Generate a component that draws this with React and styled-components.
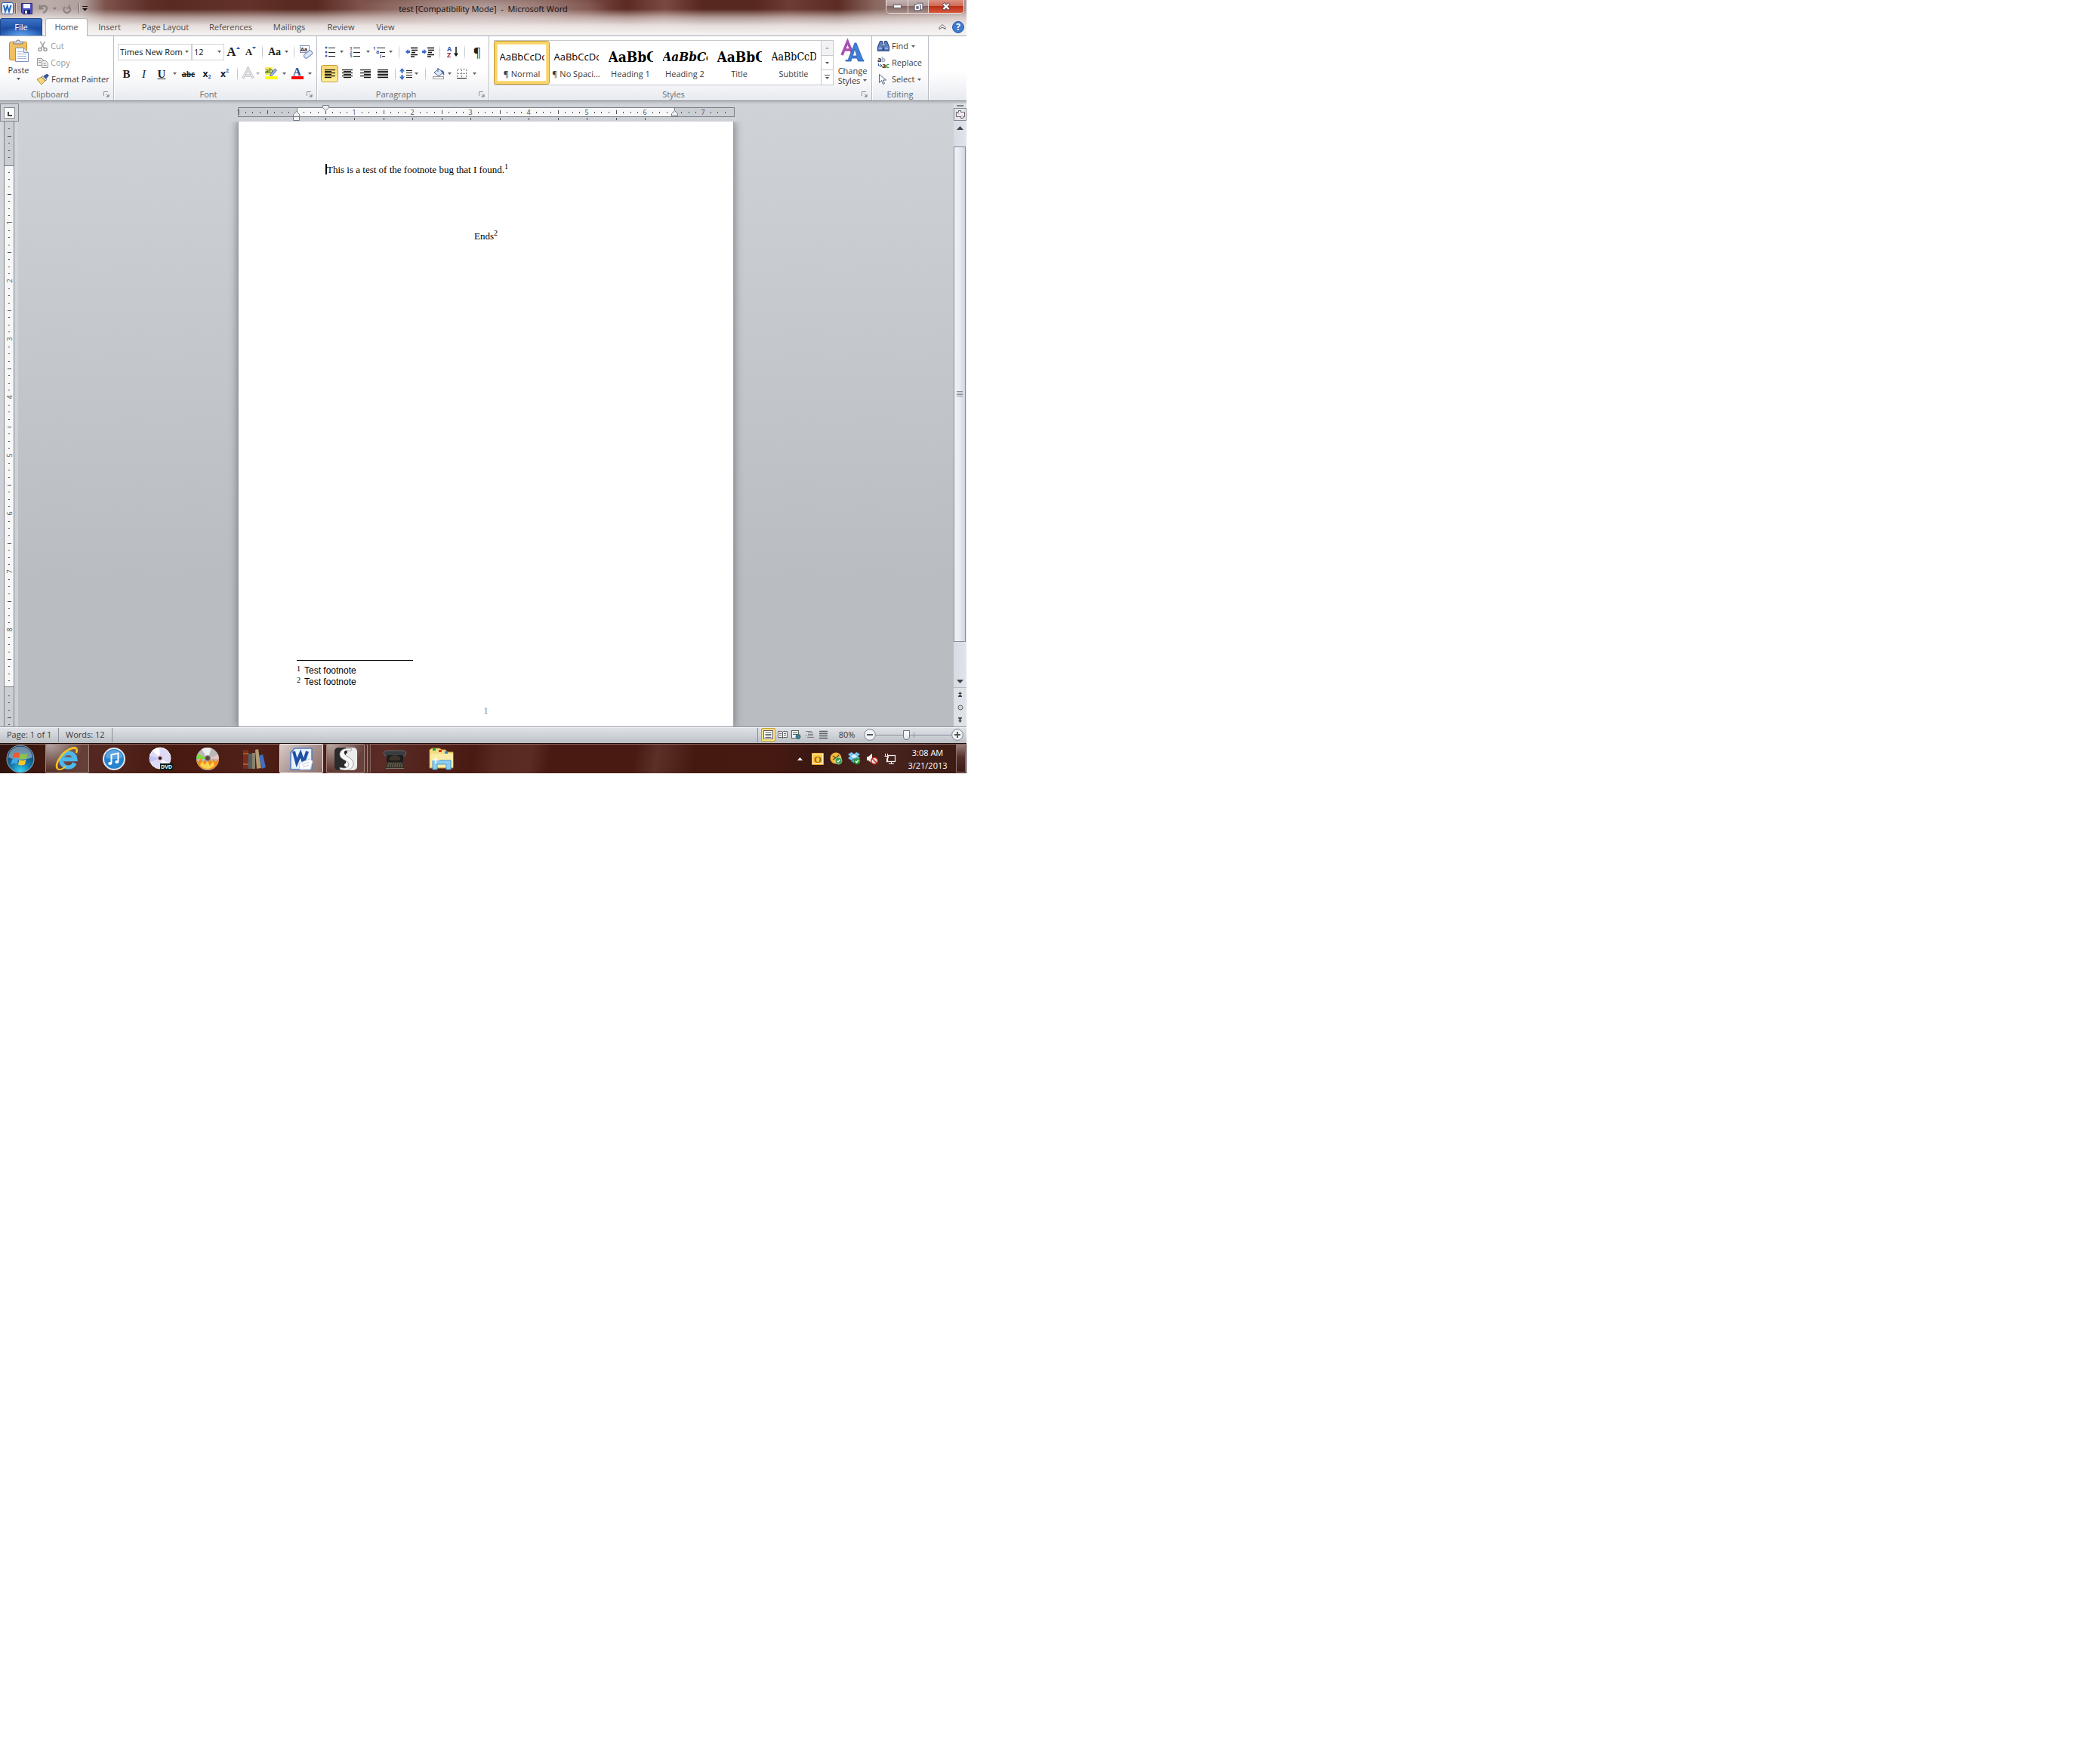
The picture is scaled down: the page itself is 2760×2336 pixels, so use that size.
import React from "react";
import styled, { createGlobalStyle, css } from "styled-components";

const ui = `"Open Sans", "Noto Sans", sans-serif`;
const serif = `"Liberation Serif", serif`;
const cambria = `"DejaVu Serif Condensed", "DejaVu Serif", serif`;

const Global = createGlobalStyle`
  *, *::before, *::after { box-sizing: border-box; }
  body { margin: 0; background: #fff; font-family: ${ui}; font-size: 11px; line-height: 14px; color: #3b3b3b; }
  button { font: inherit; color: inherit; background: none; border: 0; padding: 0; margin: 0; }
  svg { display: block; flex: none; overflow: visible; }
`;

/* ---------- window shell ---------- */
const Desktop = styled.div`
  width: 100%;
  max-width: 1280px;
  display: flex;
  flex-direction: column;
  overflow: hidden;
`;
const Chrome = styled.header`
  border-bottom: 1px solid #a9adb5;
  background:
    radial-gradient(ellipse 170px 22px at 50% 11px, rgba(255,255,255,.42), transparent),
    linear-gradient(180deg, rgba(255,255,255,0) 12px, rgba(250,247,246,.55) 23px, rgba(248,246,245,.88) 34px, #f6f4f3 100%),
    linear-gradient(90deg, #a8928e 0, #bcaeab 60px, #b0a09d 108px, #7d534c 140px, #5c2e26 200px, #582a22 230px, #63332b 330px, #582a22 380px, #582a22 420px, #7c5149 475px, #85605a 640px, #7a4c45 780px, #5c2a21 830px, #7a4a42 880px, #572820 930px, #572820 1000px, #6d3c34 1045px, #5c2c24 1110px, #8b6962 1160px, #ad9590 1280px);
`;
const TitleBar = styled.div`
  display: grid;
  grid-template-columns: 1fr auto 1fr;
  height: 24px;
`;
const QuickAccess = styled.div`
  display: flex;
  align-items: center;
  padding: 0 0 2px 2px;
`;
const QuickButton = styled.button`
  width: ${(p) => p.$w}px;
  height: 20px;
  display: flex;
  align-items: center;
  justify-content: center;
`;
const QuickRule = styled.span`
  width: 2px;
  height: 14px;
  margin: 0 2px;
  background: linear-gradient(90deg, #6f5d5a 50%, #d6cccb 50%);
`;
const WindowTitle = styled.h1`
  margin: 0;
  padding-top: 5px;
  font-size: 11px;
  font-weight: 400;
  line-height: 14px;
  color: #111;
  white-space: pre;
`;
const WindowButtons = styled.div`
  justify-self: end;
  display: flex;
  height: 18px;
  margin-right: 3px;
  border: 1px solid #efe6e4;
  border-top: 0;
  border-radius: 0 0 5px 5px;
  overflow: hidden;
  box-shadow: 0 0 1px #4a2a25;
`;
const WindowButton = styled.button`
  width: ${(p) => p.$w}px;
  display: flex;
  align-items: center;
  justify-content: center;
  border-left: ${(p) => (p.$first ? 0 : "1px solid #e4d8d6")};
  background: ${(p) =>
    p.$close
      ? "linear-gradient(180deg, #dc9384 0, #cf6a55 45%, #b92f16 50%, #d9583a 100%)"
      : "linear-gradient(180deg, #c4b3b1 0, #ae9996 45%, #83645f 50%, #a58f8b 100%)"};
`;

const TabRow = styled.nav`
  display: flex;
  height: 23px;
  align-items: stretch;
`;
const FileTab = styled.button`
  width: 56px;
  margin-right: 4px;
  border: 1px solid #1d458c;
  border-bottom: 0;
  border-radius: 3px 3px 0 0;
  color: #fff;
  text-align: center;
  background: radial-gradient(ellipse 26px 12px at 50% 100%, #5fa3ee, transparent), linear-gradient(180deg, #3c72c4, #2358ae 45%, #1d4da0 55%, #2a66bd);
`;
const Tab = styled.button`
  width: ${(p) => p.$w}px;
  text-align: center;
  color: #4a4a4a;
  ${(p) =>
    p.$active &&
    css`
      margin-bottom: -1px;
      padding-bottom: 1px;
      background: #fff;
      border: 1px solid #b5b5ba;
      border-bottom: 0;
      border-radius: 3px 3px 0 0;
    `}
`;
const TabTools = styled.div`
  display: flex;
  align-items: center;
  gap: 8px;
  margin-left: auto;
  padding-right: 3px;
`;

/* ---------- ribbon ---------- */
const Ribbon = styled.section`
  display: flex;
  height: 86px;
  border-bottom: 1px solid #84898f;
  background: linear-gradient(180deg, #fff 0, #fff 46px, #f4f5f8 66px, #e7eaf0 100%);
`;
const Group = styled.div`
  width: ${(p) => p.$w}px;
  display: flex;
  flex-direction: column;
  border-right: 1px solid #b9bcc2;
  box-shadow: 1px 0 0 #fff;
`;
const GroupBody = styled.div`
  flex: 1;
  display: flex;
  padding-left: ${(p) => p.$pad || 0}px;
`;
const GroupFoot = styled.div`
  display: flex;
  align-items: center;
  height: 16px;
  color: #666c76;
  span { flex: 1; text-align: center; }
  button { width: 18px; display: flex; justify-content: center; }
`;
const Rows = styled.div`
  display: flex;
  flex-direction: column;
  padding-top: 9px;
  gap: 6px;
`;
const Row = styled.div`
  display: flex;
  align-items: center;
  height: 23px;
`;
const Tool = styled.button`
  width: ${(p) => p.$w}px;
  height: 23px;
  display: flex;
  align-items: center;
  justify-content: center;
  ${(p) =>
    p.$on &&
    css`
      border: 1px solid #c29a3a;
      border-radius: 3px;
      background: linear-gradient(180deg, #fcd97e, #fddf70 50%, #fff2a0);
    `}
`;
const Rule = styled.span`
  width: ${(p) => p.$w}px;
  height: 20px;
  background: linear-gradient(180deg, transparent, #c3c6cc 30%, #c3c6cc 70%, transparent) center / 1px 100% no-repeat;
`;
const Glyph = styled.span`
  font-family: ${serif};
  font-size: ${(p) => p.$size || 15}px;
  line-height: 18px;
  color: #222;
  font-weight: ${(p) => (p.$light ? 400 : 700)};
  font-style: ${(p) => (p.$italic ? "italic" : "normal")};
  text-decoration: ${(p) => p.$line || "none"};
`;
const Sans = styled(Glyph)`
  font-family: ${ui};
  display: inline-flex;
  small {
    font-size: 7px;
    line-height: 10px;
    color: #2a5db0;
    align-self: ${(p) => (p.$sup ? "flex-start" : "flex-end")};
  }
`;
const Combo = styled.label`
  position: relative;
  width: ${(p) => p.$w}px;
  height: 22px;
  display: block;
  select {
    width: 100%;
    height: 100%;
    appearance: none;
    border: 1px solid #cfd2d8;
    border-radius: 0;
    background: #fff;
    padding: 0 0 0 2px;
    font: 11px/14px ${ui};
    color: #111;
  }
  svg { position: absolute; right: 4px; top: 9px; pointer-events: none; }
`;

const PasteButton = styled.button`
  width: 49px;
  padding-top: 4px;
  display: flex;
  flex-direction: column;
  align-items: center;
  gap: 3px;
`;
const Stack = styled.div`
  display: flex;
  flex-direction: column;
  padding-top: 2px;
`;
const LineButton = styled.button`
  display: flex;
  align-items: center;
  gap: ${(p) => p.$gap || 3}px;
  height: 22px;
  white-space: nowrap;
  color: ${(p) => (p.$off ? "#9a9a9a" : "#3b3b3b")};
`;

const Gallery = styled.div`
  display: flex;
  width: 450px;
  height: 60px;
  margin-top: 5px;
  border: 1px solid #c4c7cc;
  background: #fff;
`;
const StyleCell = styled.button`
  width: 72px;
  height: 56px;
  margin-top: 1px;
  padding: 7px 3px 0;
  border: 3px solid transparent;
  border-radius: 3px;
  display: flex;
  flex-direction: column;
  align-items: center;
  ${(p) => p.$on && css`border-color: #f9d469; box-shadow: inset 0 0 0 1px #fbe08a, 0 0 0 1px #c8992e;`}
`;
const Sample = styled.span`
  width: 59px;
  height: 26px;
  overflow: hidden;
  white-space: nowrap;
  text-align: left;
  color: #000;
  font-family: ${(p) => p.$font};
  font-size: ${(p) => p.$size}px;
  font-weight: ${(p) => (p.$bold ? 700 : 400)};
  font-style: ${(p) => (p.$italic ? "italic" : "normal")};
  line-height: 20px;
`;
const StyleName = styled.span`
  white-space: nowrap;
`;
const GalleryNav = styled.div`
  display: flex;
  flex-direction: column;
  width: 16px;
  border-left: 1px solid #c4c7cc;
`;
const GalleryStep = styled.button`
  flex: 1;
  display: flex;
  align-items: center;
  justify-content: center;
  border-top: ${(p) => (p.$first ? 0 : "1px solid #c4c7cc")};
  background: ${(p) => (p.$first ? "#f2f2f4" : "#fff")};
`;
const ChangeStyles = styled.button`
  width: 50px;
  padding-top: 6px;
  display: flex;
  flex-direction: column;
  align-items: center;
  line-height: 13px;
  svg + span { margin-top: 5px; }
`;
const Inline = styled.span`
  display: flex;
  align-items: center;
  gap: 4px;
`;

/* ---------- workspace ---------- */
const Workspace = styled.main`
  display: grid;
  grid-template-columns: 24px 1fr 17px;
  grid-template-rows: 24px auto;
  padding-top: 3px;
  background: linear-gradient(180deg, #b3b7bc 0, #cfd2d7 4px, #cdd0d5 60px, #b9bdc2 640px, #b9bdc2 100%);
`;
const TabCorner = styled.button`
  width: 25px;
  height: 24px;
  border: 1px solid #858a92;
  display: flex;
  align-items: center;
  justify-content: center;
  background: #ced1d6;
`;
const TopRuler = styled.div`
  display: flex;
  justify-content: center;
`;
const SideRuler = styled.div`
  background: rgba(214, 218, 223, 0.65);
  padding-left: 5px;
  overflow: hidden;
`;
const Canvas = styled.div`
  display: flex;
  justify-content: center;
`;
const Sheet = styled.article`
  width: 655px;
  min-height: 801px;
  display: flex;
  flex-direction: column;
  padding: 56px 77px 13px;
  background: #fff;
  box-shadow: -1px 0 0 #a0a4a9, 1px 0 0 #a0a4a9, 0 0 11px 1px #70757b;
  clip-path: inset(0 -14px);
  font-family: ${serif};
  font-size: 13px;
  line-height: 16px;
  color: #000;
  sup { font-size: 10px; line-height: 0; vertical-align: 5px; }
`;
const Para = styled.p`
  margin: 0;
  padding-left: 38px;
  display: flex;
`;
const Caret = styled.span`
  width: 2px;
  height: 14px;
  background: #000;
`;
const Ends = styled.p`
  margin: 72px 0 0;
  text-align: center;
`;
const Notes = styled.ol`
  list-style: none;
  margin: auto 0 0;
  padding: 7px 0 0;
  font: 12px/15px "Liberation Sans", sans-serif;
  background: linear-gradient(#000, #000) 0 0 / 154px 1px no-repeat;
  li { display: flex; align-items: flex-start; gap: 5px; }
  sup { font-family: ${serif}; line-height: 9px; }
`;
const Folio = styled.p`
  margin: 22px 0 0;
  text-align: center;
  font-size: 12px;
  color: #7d7d7d;
`;

const ScrollTop = styled.div`
  display: flex;
  flex-direction: column;
  align-items: center;
  background: #dde0e6;
`;
const SplitBar = styled.span`
  width: 9px;
  height: 2px;
  margin: 2px 0;
  background: #7c8087;
`;
const RulerToggle = styled.button`
  width: 17px;
  height: 17px;
  border: 1px solid #858a92;
  background: #e4e6ea;
  display: flex;
  align-items: center;
  justify-content: center;
`;
const ScrollRail = styled.div`
  display: flex;
  flex-direction: column;
  align-items: stretch;
  background: linear-gradient(90deg, #d7dbe2, #dfe4ed);
`;
const ScrollStep = styled.button`
  height: ${(p) => p.$h}px;
  display: flex;
  align-items: center;
  justify-content: center;
`;
const ScrollThumb = styled.div`
  height: 656px;
  margin: 16px 1px 44px 0;
  border: 1px solid #868d98;
  background: linear-gradient(90deg, #f0f2f7, #e8ebf2 50%, #d0d5de);
  display: flex;
  align-items: center;
  justify-content: center;
`;
const BrowseSteps = styled.div`
  margin-top: auto;
  border-top: 1px solid #b7bbc4;
  background: #dde1e8;
  display: flex;
  flex-direction: column;
`;

/* ---------- status bar ---------- */
const StatusBar = styled.footer`
  height: 22px;
  display: flex;
  align-items: center;
  padding: 0 4px 1px 0;
  border-top: 1px solid #8f959d;
  box-shadow: inset 0 1px 0 #f5f6f8;
  background: linear-gradient(180deg, #e0e3e8, #cfd2d7 50%, #bbbfc4);
`;
const StatusCell = styled.button`
  height: 19px;
  width: ${(p) => p.$w}px;
  padding-left: 9px;
  text-align: left;
  white-space: nowrap;
  border-right: 1px solid #8a8f96;
`;
const StatusRight = styled.div`
  margin-left: auto;
  display: flex;
  align-items: center;
  height: 19px;
  padding-left: 4px;
  border-left: 1px solid #8a8f96;
`;
const ViewButton = styled.button`
  width: 18px;
  height: 18px;
  display: flex;
  align-items: center;
  justify-content: center;
  ${(p) => p.$on && css`
    width: 19px;
    border: 1px solid #c29a3a;
    border-radius: 2px;
    background: linear-gradient(180deg, #fcdf85, #ffe97f);
  `}
`;
const ZoomValue = styled.button`
  width: 45px;
  text-align: center;
`;
const Slider = styled.input`
  appearance: none;
  width: 100px;
  height: 16px;
  margin: 0;
  background:
    linear-gradient(#8a929e, #8a929e) 50% 50% / 1px 7px no-repeat,
    linear-gradient(#8a929e, #8a929e) 0 50% / 100% 1px no-repeat;
  &::-webkit-slider-thumb {
    appearance: none;
    width: 9px;
    height: 13px;
    background: linear-gradient(#fff, #dfe3ea);
    border: 1px solid #6f7681;
    border-radius: 1px 1px 5px 5px;
  }
`;

/* ---------- taskbar ---------- */
const Taskbar = styled.nav`
  height: 40px;
  display: flex;
  border-top: 1px solid #1c0d0a;
  box-shadow: inset 0 1px 0 #8c6a64;
  color: #fff;
  background: linear-gradient(100deg, #2e120d 0, #43190f 70px, #542821 125px, #47190f 230px, #4f2119 330px, #46180f 400px, #5a2c25 500px, #481a12 620px, #57291f 650px, #5a2c23 695px, #481a12 720px, #481a12 830px, #5b3027 860px, #461910 910px, #471a11 1010px, #3a1711 1060px, #47241d 1150px, #3c1a14 100%);
`;
const Start = styled.button`
  width: 60px;
  padding-right: 6px;
  display: flex;
  align-items: center;
  justify-content: center;
`;
const TaskList = styled.div`
  display: flex;
  gap: 4px;
`;
const Task = styled.button`
  width: 58px;
  display: flex;
  align-items: center;
  justify-content: center;
  border: 1px solid transparent;
  border-radius: 2px;
  ${(p) => p.$open && css`
    border-color: #a08682;
    background: radial-gradient(ellipse 44px 34px at 10% 0, rgba(255,255,255,.55), transparent), rgba(255,255,255,.12);
  `}
  ${(p) => p.$active && css`
    border-color: #f1e8e6;
    background: linear-gradient(135deg, #d8cbc9, #a58d89 60%, #8e706b);
  `}
  ${(p) => p.$stacked && css`
    width: 51px;
    margin-right: 7px;
    box-shadow: 3px 0 0 #5b332c, 4px 0 0 #a08682, 7px 0 0 #5b332c, 8px 0 0 #80625d;
  `}
`;
const Tray = styled.div`
  margin-left: auto;
  display: flex;
  align-items: center;
`;
const TrayButton = styled.button`
  width: 24px;
  height: 24px;
  display: flex;
  align-items: center;
  justify-content: center;
`;
const Clock = styled.time`
  width: 75px;
  text-align: center;
  line-height: 17px;
`;
const ShowDesktop = styled.button`
  align-self: stretch;
  width: 13px;
  margin: 1px 1px 1px 0;
  border: 1px solid #8f7570;
  background: linear-gradient(180deg, #957a75, #54302a 45%, #3c1c16);
`;

/* ---------- icons ---------- */
const Down = ({ c = "#5a5a5a" }) => (
  <svg width="5" height="3"><path d="M0 0h5L2.5 3z" fill={c} /></svg>
);
const Up = ({ c = "#5a5a5a" }) => (
  <svg width="5" height="3"><path d="M0 3h5L2.5 0z" fill={c} /></svg>
);
const Launcher = () => (
  <svg width="8" height="8" fill="none" stroke="#8a8f98"><path d="M.5 6V.5H6M3.5 3.5l3 3M7 3.5V7H3.5" /><path d="M5 7h2V5z" fill="#8a8f98" /></svg>
);
const WordMark = () => (
  <svg width="16" height="16">
    <rect x=".5" y=".5" width="15" height="15" rx="2" fill="#eef4fc" stroke="#2a5fae" />
    <path d="M3 4l2 8 2.6-7 2.4 7L12.6 4" fill="none" stroke="#2566b8" strokeWidth="2" />
  </svg>
);
const SaveIcon = () => (
  <svg width="15" height="15">
    <path d="M.5.5h14v14h-12l-2-2z" fill="#4a4fc4" stroke="#23267c" />
    <rect x="3" y="1" width="9" height="6" fill="#f4f6fd" />
    <rect x="4" y="9" width="8" height="5" fill="#1c1f5e" /><rect x="5" y="10" width="3" height="4" fill="#e8eaf8" />
  </svg>
);
const Undo = ({ flip }) => (
  <svg width="13" height="13" fill="none" stroke="#8d8381" strokeWidth="2.2">
    {flip ? <path d="M9 1.5v4h-4M8.5 4A4.5 4.5 0 1 1 3 4" /> : <path d="M1.5 1.5v5h5M2 6c3-5 9-4 9 0s-3 5-5 6" />}
  </svg>
);
const PasteIcon = () => (
  <svg width="28" height="31">
    <rect x="1.5" y="3.5" width="23" height="24" rx="2" fill="#f0bf62" stroke="#c18a34" />
    <path d="M7 6V3.5h3.500a2.500 2.500 0 0 1 5 0H19V6z" fill="#dadde2" stroke="#70757d" />
    <path d="M9.500 11.500h11l6 6v12h-17z" fill="#f8fafd" stroke="#7d93ba" />
    <path d="M20.500 11.500v6h6" fill="#dfe8f5" stroke="#7d93ba" />
    <path d="M12 16.500h7M12 19.500h12M12 22.500h12M12 25.500h12" stroke="#a7b8d6" />
  </svg>
);
const CutIcon = () => (
  <svg width="15" height="15" fill="none" stroke="#999" strokeWidth="1.5"><path d="M4.5 1l5 9M10.5 1l-5 9" /><circle cx="4" cy="11.5" r="2" /><circle cx="11" cy="11.5" r="2" /></svg>
);
const CopyIcon = () => (
  <svg width="15" height="14" fill="#ececec" stroke="#999"><path d="M.5 1.5h6l2 2v7h-8z" /><path d="M6.5 4.5h5l3 3v6h-8z" /><path d="M2 4.5h3M2 6.5h3M8.5 8.5h3M8.5 10.5h4" /></svg>
);
const BrushIcon = () => (
  <svg width="16" height="15"><path d="M0 7l6-3 5 5-5 5C4 12 2 10 0 7z" fill="#f6d77a" stroke="#b78f35" /><path d="M6 4l2-1.500 5 5L11 9z" fill="#d9dce4" stroke="#555" strokeWidth=".7" /><path d="M9 3l4-3 2.500 2L12 6z" fill="#3a55a4" stroke="#233469" strokeWidth=".7" /></svg>
);
const ClearFormat = () => (
  <svg width="17" height="17">
    <rect x=".5" y=".5" width="12" height="9" fill="#fff" stroke="#7f93b5" />
    <text x="1" y="8" fontSize="7" fontWeight="700" fontFamily="Open Sans" fill="#223">Aa</text>
    <rect x="5" y="9" width="12" height="6" rx="2.5" transform="rotate(-38 11 12)" fill="#dfe7f4" stroke="#6f87b4" />
  </svg>
);
const EffectA = () => (
  <svg width="17" height="17"><path d="M1.5 15L8.500 2l7 13M4.500 11h8" fill="none" stroke="#c9c9cd" strokeWidth="3.5" /><path d="M1.5 15L8.500 2l7 13M4.500 11h8" fill="none" stroke="#f7f7f7" strokeWidth="1" /></svg>
);
const Highlight = () => (
  <svg width="17" height="17">
    <rect x="0" y="0" width="10" height="10" fill="#f4ea5c" /><text x="0" y="8" fontSize="9" fontFamily="Open Sans" fill="#222">ab</text>
    <path d="M7 10l6-8 2.500 2-6 7-3 .5z" fill="#9db9e6" stroke="#3b5c9b" strokeWidth=".8" /><rect y="12" width="16" height="4" fill="#ff0" />
  </svg>
);
const FontColor = () => (
  <svg width="16" height="17"><text x="2" y="11" fontSize="15" fontWeight="700" fontFamily="Liberation Serif" fill="#2f4f8f">A</text><rect y="12" width="16" height="4" fill="#f00" /></svg>
);
const ListIcon = ({ kind }) => (
  <svg width={kind === "multi" ? 18 : 15} height="16">
    {kind === "bullet" && [2, 8, 13].map((y) => <circle key={y} cx="2" cy={y} r="1.5" fill="#3e66b0" />)}
    {kind === "number" && ["1", "2", "3"].map((t, i) => <text key={t} x="0" y={5 + i * 5} fontSize="6" fontWeight="700" fontFamily="Open Sans" fill="#2f5aa8">{t}</text>)}
    {kind !== "multi" && <path d="M5 2.5h9M5 8.5h9M5 13.5h9" stroke="#222" />}
    {kind === "multi" && <>
      <path d="M5 2.5h11M9 8.5h7M12 13.5h4" stroke="#222" />
      <text x="0" y="5" fontSize="6" fontWeight="700" fontFamily="Open Sans" fill="#2f5aa8">1</text>
      <text x="4" y="10" fontSize="7" fontWeight="700" fontFamily="Open Sans" fill="#2f5aa8">a</text>
      <text x="9" y="16" fontSize="7" fontWeight="700" fontFamily="Open Sans" fill="#2f5aa8">i</text></>}
  </svg>
);
const Indent = ({ right }) => (
  <svg width="17" height="14">
    <path d="M7 1.5h9M8 4.5h8M8 7.5h5M7 10.5h9M7 13h5" stroke="#111" strokeWidth="1.5" />
    <path d={right ? "M6 6.500L2.500 3v2H0v3h2.500v2z" : "M0 6.500L3.500 3v2H6v3H3.500v2z"} fill="#3a6dc8" />
  </svg>
);
const SortIcon = () => (
  <svg width="15" height="17"><text x="0" y="8" fontSize="9" fontWeight="700" fontFamily="Open Sans" fill="#2f5aa8">A</text><text x="0" y="16" fontSize="9" fontWeight="700" fontFamily="Open Sans" fill="#9c3038">Z</text><path d="M12 2v10" stroke="#111" strokeWidth="1.5" /><path d="M9 10.5h6L12 15z" fill="#111" /></svg>
);
const Align = ({ kind }) => {
  const short = { left: 0, center: 2, right: 5, justify: 0 }[kind];
  const w = kind === "justify" ? 14 : kind === "center" ? 10 : 9;
  return (
    <svg width="14" height="12" fill="#111">
      {[0, 2, 4, 6, 8, 10].map((y, i) => <rect key={y} x={i % 2 ? short : 0} y={y} width={i % 2 ? w : 14} height="1.2" />)}
    </svg>
  );
};
const Spacing = () => (
  <svg width="18" height="16"><path d="M3.5 0l3.500 4.500H0zM3.500 16L0 11.500h7z" fill="#3a6dc8" /><path d="M3.5 4v3M3.5 9v3" stroke="#3a6dc8" strokeWidth="2" /><path d="M9 3.5h8M9 6.5h8M9 9.5h8M9 12.5h8" stroke="#222" /></svg>
);
const Shading = () => (
  <svg width="18" height="17"><path d="M3 7l6-5 6 5-6 5z" fill="#dfe7f3" stroke="#46608f" /><path d="M8 1v5" stroke="#46608f" /><path d="M12 4c4 0 5 3 4 7-2-1-1-4-4-5z" fill="#3a6dc8" /><rect x="1.5" y="12.5" width="14" height="3" fill="#fff" stroke="#999" /></svg>
);
const Borders = () => (
  <svg width="14" height="14" fill="none" stroke="#666" strokeDasharray="1 1"><path d="M.5 0v14M6.5 0v14M12.5 0v14M0 .5h13M0 6.5h13" /><path d="M0 12.5h13" stroke="#111" strokeDasharray="none" /></svg>
);
const ChangeIcon = () => (
  <svg width="30" height="28">
    <path d="M1 19L8.500 1l7 17M4 12h9" fill="none" stroke="#a84fb4" strokeWidth="3.5" />
    <path d="M6 27h7l1-4h7l1.500 4H30v-1.500h-1L20 3h-2L9 25.500H6zM15 20l3-9 3 9z" fill="#3f7fd8" stroke="#2a5eb0" strokeWidth=".8" />
  </svg>
);
const FindIcon = () => (
  <svg width="16" height="14" fill="#5b7fc2" stroke="#22386e"><path d="M3.500.5h3v4l1 9h-7V8z" /><path d="M9.500.5h3l3 7.500v5.500h-7v-9z" /><path d="M6.500 5h3M2 10h4M10 10h4" stroke="#dfe8fa" /></svg>
);
const ReplaceIcon = () => (
  <svg width="17" height="16" fontFamily="Open Sans" fontWeight="700" fontSize="9"><text x="0" y="7" fill="#333">a</text><text x="5" y="7" fill="#aaa">b</text><text x="6" y="15" fill="#333">a</text><text x="11" y="15" fill="#2c9440">c</text><path d="M1.5 9v3h4M4 10l2 2-2 2" fill="none" stroke="#3a5ca8" /></svg>
);
const SelectIcon = () => (
  <svg width="15" height="16"><path d="M2.500 1.500v11l3-3 2 5 2-1-2-4.500h4z" fill="#fff" stroke="#4b6186" /></svg>
);
const DocLines = ({ kind }) => (
  <svg width="13" height="12" fill="none" stroke="#5d5f63">
    {kind === "print" && <><rect x=".5" y=".5" width="12" height="11" fill="#fff" /><path d="M2.5 3.5h8M2.5 5.5h8M2.5 7.5h8M2.5 9.5h8" /></>}
    {kind === "read" && <><path d="M.5 1.5h5l1 1 1-1h5v8h-5l-1 1-1-1h-5zM6.5 2v9" fill="#f3f3f3" /><path d="M2 4.5h3M2 6.5h3M8 4.5h3M8 6.5h3" /></>}
    {kind === "web" && <><rect x=".5" y=".5" width="9" height="10" fill="#f3f3f3" /><path d="M2 3.5h6M2 5.5h6" /><circle cx="9" cy="8.5" r="3" fill="#3d80a8" stroke="#2d6a4a" /></>}
    {kind === "outline" && <path d="M1 1.5h8M4 3.5h7M4 5.5h7M1 7.5h2M4 7.5h7M3 9.5h9" stroke="#7e8186" />}
    {kind === "draft" && <path d="M1 1.5h11M1 4.5h11M1 7.5h11M1 10.5h11" strokeWidth="1.5" />}
  </svg>
);
const ZoomKnob = ({ plus }) => (
  <svg width="16" height="16" fill="none" stroke="#555"><circle cx="8" cy="8" r="7.3" fill="#f1f3f6" stroke="#7c828b" /><path d={plus ? "M4 8h8M8 4v8" : "M4 8h8"} strokeWidth="2" /></svg>
);

const StartOrb = () => (
  <svg width="38" height="38">
    <defs>
      <radialGradient id="orb" cx=".5" cy=".95" r=".9"><stop offset="0" stopColor="#35d6f2" /><stop offset=".4" stopColor="#1878ab" /><stop offset="1" stopColor="#0c3558" /></radialGradient>
    </defs>
    <circle cx="19" cy="19" r="18" fill="url(#orb)" stroke="#8fb3c4" />
    <path d="M3 17C4 7 11 2.500 19 2.500S34 7 35 17c-10 4-22 4-32 0z" fill="#fff" opacity=".4" />
    <path d="M10 12c3-2 6-2 8-.5L16.500 18c-2-1.500-5-1.500-8 .5z" fill="#f0592a" />
    <path d="M19.500 12c3 1.500 6 1.500 9-.5L27 18c-3 2-6 1.500-9 .5z" fill="#8fc640" />
    <path d="M8 20c3-2 6-2 8-.5L14.500 26c-2-1.500-5-1.500-8 .5z" fill="#3fa9e8" />
    <path d="M17.500 20c3 1.500 6 1.500 9-.5L25 26c-3 2-6 1.500-9 .5z" fill="#fcc726" />
  </svg>
);
const IeIcon = () => (
  <svg width="32" height="32" fill="none">
    <path d="M26 21.500a9.500 9.500 0 1 1 .8-5H9" stroke="#4bb8ee" strokeWidth="5.5" />
    <path d="M3 29C-1 22 10 6 22 2c6-2 8 1 6 6" stroke="#f7c520" strokeWidth="2.6" />
    <path d="M3 29c3 3 9-1 11-3" stroke="#f7c520" strokeWidth="2" />
  </svg>
);
const ItunesIcon = () => (
  <svg width="30" height="30"><circle cx="15" cy="15" r="14" fill="#2683d0" stroke="#dfe6ec" strokeWidth="2" /><path d="M4 13a11 10 0 0 1 22 0c-7 3-15 3-22 0z" fill="#fff" opacity=".25" /><path d="M11.5 20.500V9.500l9-2v11" fill="none" stroke="#fff" strokeWidth="2" /><ellipse cx="9.8" cy="21" rx="2.6" ry="2" fill="#fff" /><ellipse cx="18.8" cy="19" rx="2.6" ry="2" fill="#fff" /></svg>
);
const DvdIcon = () => (
  <svg width="32" height="32"><circle cx="15" cy="15" r="14" fill="#dcdaf6" stroke="#f5f5ff" /><path d="M15 15L5 5a14 14 0 0 1 9-4zM15 15l12 7a14 14 0 0 1-9 7z" fill="#fff" /><path d="M15 15L2 20a14 14 0 0 1-1-8z" fill="#c2c4f4" /><circle cx="15" cy="15" r="4" fill="#f0c8e0" /><circle cx="15" cy="15" r="2.3" fill="#222" /><rect x="15" y="22" width="17" height="9" fill="#0b1a1c" /><text x="16" y="29" fontSize="7" fontWeight="700" fontFamily="Open Sans" fill="#dff">DVD</text></svg>
);
const BurnIcon = () => (
  <svg width="32" height="32"><circle cx="16" cy="16" r="15" fill="#b9b9b9" /><path d="M16 16L8 3a15 15 0 0 1 13-1z" fill="#eee" /><path d="M16 16L1 16a15 15 0 0 1 2-7z" fill="#7adb3c" /><path d="M16 16l14-6 1 6z" fill="#e9c2c2" /><path d="M1 17l3 3 3-5 3 5 3-3 2 4 3-6 3 5 3-4 2 4 5-4c0 8-6 14-14.500 14S2 25 1 17z" fill="#f08b1d" /><path d="M6 24l3-5 3 5 4-5 3 6 4-6 2 5c-3 6-15 7-19 0z" fill="#fbd44c" /><circle cx="16" cy="15" r="3.5" fill="#5c4640" stroke="#999" /></svg>
);
const BooksIcon = () => (
  <svg width="32" height="30"><rect x="1" y="3" width="7" height="25" fill="#7c2c1c" /><path d="M1 8h7M1 22h7" stroke="#c98c3c" /><rect x="8" y="8" width="5" height="20" fill="#4c6468" /><path d="M13 7h4v21h-4z" fill="#8c806c" /><path d="M17 3l4-1 4 25-6 1z" fill="#b39b74" /><path d="M22 11l5-2 4 17-5 2z" fill="#3f70c4" /></svg>
);
const WordIcon = () => (
  <svg width="32" height="32"><path d="M2 8l5-6h23v28H2z" fill="#e9f1fb" stroke="#4d7ec0" strokeWidth="1.5" /><path d="M6 6l4 15 5-12 4 12 5-15" fill="none" stroke="#1f4fa3" strokeWidth="4" /><path d="M13 22l14-6 4 3-3 11-14 0z" fill="#fff" stroke="#b9cbe4" /><path d="M17 24l9-4M18 27l8-3" stroke="#bccbe0" /></svg>
);
const ScrivIcon = () => (
  <svg width="32" height="32"><rect x="1" y="1" width="30" height="30" rx="5" fill="#2a2a2a" /><path d="M16 1h10a5 5 0 0 1 5 5v20a5 5 0 0 1-5 5H16z" fill="#ececec" /><path d="M24 3C14 0 7 5 8 11c1 7 13 7 12 13-1 4-6 5-12 3v3c11 3 18-1 18-8 0-8-12-9-12-14 0-3 4-4 8-2z" fill="#f7f7f7" stroke="#777" strokeWidth=".7" /><circle cx="16" cy="7" r="2" fill="#222" /><circle cx="16" cy="24" r="2" fill="#fff" /></svg>
);
const TypewriterIcon = () => (
  <svg width="32" height="28"><path d="M4 3h24l3 3-2 4H3L1 6z" fill="#3a3c40" stroke="#777b80" strokeWidth=".7" /><path d="M5 9h22v9H5z" fill="#1d1d1f" /><path d="M9 12c4-4 10-4 14 0v4H9z" fill="#3c3428" /><path d="M5 18h22l1 8H4z" fill="#37332a" /><path d="M7 20h18M6 22h20M6 24h20" stroke="#7d745f" strokeDasharray="2 1" /><path d="M4 26.5h24" stroke="#777" /></svg>
);
const ExplorerIcon = () => (
  <svg width="34" height="32"><path d="M1 4l3-2h10l3 2h5l2 3h8v21H1z" fill="#f3dc82" stroke="#c5a343" /><rect x="5" y="2" width="4" height="3" fill="#24a844" /><rect x="13" y="4" width="4" height="3" fill="#d7382c" /><rect x="21" y="6" width="4" height="3" fill="#2c84d8" /><path d="M2 9h30v18H2z" fill="#f9eaa6" /><path d="M5 30V18h24v12h-6v-7H11v7z" fill="#8ccdf0" stroke="#4898c8" /><path d="M9 13v9M4.500 17.500h9" stroke="#fff" strokeWidth="1.5" /></svg>
);
const tray = {
  outlook: <svg width="16" height="16"><rect width="16" height="16" rx="1" fill="#f3a11a" /><rect x="1.5" y="1.5" width="13" height="13" fill="#fbc640" stroke="#fff3c9" /><text x="8" y="13" textAnchor="middle" fontSize="13" fontWeight="700" fontFamily="Liberation Serif" fill="#a85f04">O</text></svg>,
  sync: <svg width="17" height="17"><circle cx="8" cy="8" r="7.5" fill="#f0b93c" /><path d="M4 5l4 3 4-4M4 10l4-2 3 4" stroke="#5b4216" fill="none" strokeWidth="1.3" /><circle cx="11.5" cy="11.5" r="4.5" fill="#2c9a4a" stroke="#fff" strokeWidth=".6" /><path d="M9.5 11.5l1.500 1.500 2.500-3" stroke="#fff" fill="none" strokeWidth="1.3" /></svg>,
  dropbox: <svg width="17" height="17"><path d="M4.500 0L8 2.500 11.500 0 16 3l-3 2.500L16 8l-4.500 3L8 8.500 4.500 11 0 8l3-2.500L0 3z" fill="#74c3f5" /><path d="M8 3l4 2.500L8 8 4 5.500z" fill="#e4f4fe" /><path d="M4 12l4-3 4 3-4 2.500z" fill="#4ea2e0" /><circle cx="12" cy="12" r="4.3" fill="#2c9a3a" /><path d="M10 12l1.500 1.500L14 10.500" stroke="#fff" fill="none" strokeWidth="1.3" /></svg>,
  volume: <svg width="16" height="16"><path d="M1 5h2l5-4v13l-5-4H1z" fill="#f2f2f2" /><circle cx="11" cy="10.5" r="4.3" fill="#e8e8e8" stroke="#d8281c" strokeWidth="1.6" /><path d="M8 7.5l6 6" stroke="#d8281c" strokeWidth="1.6" /></svg>,
  network: <svg width="16" height="16" fill="none" stroke="#f0f0f0"><rect x="4.5" y="3.5" width="10" height="8" strokeWidth="1.3" /><path d="M6 14.5h7M9.5 12v2M1.5 1v3M4.5 1v3M.5 4.5h5v2l-2 1v5" /></svg>,
};

/* ---------- rulers ---------- */
const INCH = 77;
const marks = (from, to, origin) => {
  const out = [];
  for (let i = Math.ceil(((from - origin) * 8) / INCH); origin + (i * INCH) / 8 < to; i += 1)
    out.push({ i, at: Math.round(origin + (i * INCH) / 8) });
  return out;
};
const HorizontalRuler = () => (
  <svg width="667" height="24" role="img" aria-label="Horizontal ruler" fontFamily="Open Sans" fontSize="9" fill="#4c5058">
    <rect x="5.5" y="5.5" width="657" height="12" fill="#cbced3" stroke="#7d828a" />
    <rect x="83" y="6" width="500" height="11" fill="#f7f7f8" />
    <path d="M83.5 6v11M583.5 6v11" stroke="#7d828a" />
    {marks(8, 655, 82).map(({ i, at }) =>
      i === 0 ? null : i % 8 === 0 ? (
        <text key={i} x={at} y="15" textAnchor="middle">{Math.abs(i / 8)}</text>
      ) : (
        <rect key={i} x={at} y={i % 4 === 0 ? 9 : 11} width="1" height={i % 4 === 0 ? 5 : 2} />
      )
    )}
    <text x="6" y="15" textAnchor="middle">1</text>
    {marks(115, 560, 82).filter((m) => m.i % 4 === 0).map(({ i, at }) => <rect key={i} x={at} y="19" width="1" height="3" />)}
    <g fill="#eceef1" stroke="#777c84">
      <path d="M117.5 2.5h8v3l-4 4-4-4z" />
      <path d="M78.5 17.5v-3l4-4 4 4v3zM78.5 17.5h8v5h-8z" />
      <path d="M579.5 16.5v-3l4-4 4 4v3z" />
    </g>
  </svg>
);
const VerticalRuler = () => (
  <svg width="15" height="801" role="img" aria-label="Vertical ruler" fontFamily="Open Sans" fontSize="9" fill="#4c5058">
    <rect x=".5" y="-1" width="13" height="803" fill="#cbced3" stroke="#7d828a" />
    <rect x="1" y="59" width="12" height="689" fill="#f7f7f8" />
    <path d="M0 58.5h14M0 748.5h14" stroke="#7d828a" />
    {marks(5, 800, 57).map(({ i, at }) =>
      i === 0 || i === 72 ? null : i % 8 === 0 ? (
        <text key={i} transform={`translate(11 ${at}) rotate(-90)`} textAnchor="middle">{Math.abs(i / 8)}</text>
      ) : (
        <rect key={i} x={i % 4 === 0 ? 5 : 6} y={at} width={i % 4 === 0 ? 5 : 2} height="1" />
      )
    )}
  </svg>
);

/* ---------- content ---------- */
const tabs = [["Home", 56], ["Insert", 58], ["Page Layout", 90], ["References", 83], ["Mailings", 72], ["Review", 65], ["View", 53]];
const styleSet = [
  { sample: "AaBbCcDc", name: "¶ Normal", font: ui, size: 13, on: true },
  { sample: "AaBbCcDc", name: "¶ No Spaci...", font: ui, size: 13 },
  { sample: "AaBbC", name: "Heading 1", font: cambria, size: 19, bold: true },
  { sample: "AaBbCc", name: "Heading 2", font: cambria, size: 17, bold: true, italic: true },
  { sample: "AaBbC", name: "Title", font: cambria, size: 19, bold: true },
  { sample: "AaBbCcD", name: "Subtitle", font: cambria, size: 14 },
];

const Split = ({ w, cw = 7, label, off, children }) => (
  <>
    <Tool $w={w} aria-label={label}>{children}</Tool>
    <Tool $w={cw} aria-label={`${label} options`}><Down c={off ? "#aaa" : undefined} /></Tool>
  </>
);
const RibbonGroup = ({ w, name, pad, launcher = true, children }) => (
  <Group $w={w} aria-label={name}>
    <GroupBody $pad={pad}>{children}</GroupBody>
    <GroupFoot><span>{name}</span>{launcher && <button aria-label={`${name} settings`}><Launcher /></button>}</GroupFoot>
  </Group>
);

export default function App() {
  return (
    <Desktop>
      <Global />
      <Chrome>
        <TitleBar>
          <QuickAccess>
            <WordMark />
            <QuickRule />
            <QuickButton $w={22} aria-label="Save"><SaveIcon /></QuickButton>
            <QuickButton $w={22} aria-label="Undo"><Undo /></QuickButton>
            <QuickButton $w={9} aria-label="Undo options"><Down c="#7f7573" /></QuickButton>
            <QuickButton $w={25} aria-label="Redo"><Undo flip /></QuickButton>
            <QuickRule />
            <QuickButton $w={8} aria-label="Customize toolbar">
              <svg width="7" height="7"><path d="M0 .5h7" stroke="#111" /><path d="M0 3h7L3.5 6.500z" fill="#111" /></svg>
            </QuickButton>
          </QuickAccess>
          <WindowTitle>{"test [Compatibility Mode]  -  Microsoft Word"}</WindowTitle>
          <WindowButtons>
            <WindowButton $w={28} $first aria-label="Minimize"><svg width="11" height="5"><rect x=".5" y=".5" width="10" height="4" fill="#fff" stroke="#5d5f70" /></svg></WindowButton>
            <WindowButton $w={27} aria-label="Restore"><svg width="12" height="12" fill="none"><path d="M4 2.5h6.500V9M2.500 4.500h5v5h-5z" stroke="#55586a" strokeWidth="3.5" /><path d="M4 2.5h6.500V9M2.500 4.500h5v5h-5z" stroke="#fff" strokeWidth="1.7" /></svg></WindowButton>
            <WindowButton $w={47} $close aria-label="Close"><svg width="12" height="11"><path d="M2 1.5l8 8M10 1.5l-8 8" stroke="#5a4a58" strokeWidth="4" /><path d="M2.5 2l7 7M9.500 2l-7 7" stroke="#fff" strokeWidth="2.4" /></svg></WindowButton>
          </WindowButtons>
        </TitleBar>
        <TabRow>
          <FileTab>File</FileTab>
          {tabs.map(([name, w], i) => <Tab key={name} $w={w} $active={i === 0}>{name}</Tab>)}
          <TabTools>
            <button aria-label="Minimize ribbon"><svg width="10" height="8"><path d="M1 6.5v-2l4-4 4 4v2L5 4z" fill="#fff" stroke="#555" /></svg></button>
            <button aria-label="Help"><svg width="16" height="16"><circle cx="8" cy="8" r="7.5" fill="#3f7bd0" stroke="#2a5aa6" /><text x="8" y="12" fontSize="12" fontWeight="700" textAnchor="middle" fontFamily="Open Sans" fill="#fff">?</text></svg></button>
          </TabTools>
        </TabRow>
      </Chrome>

      <Ribbon>
        <RibbonGroup w={151} name="Clipboard">
          <PasteButton><PasteIcon /><span>Paste</span><Down /></PasteButton>
          <Stack>
            <LineButton $off><CutIcon />Cut</LineButton>
            <LineButton $off><CopyIcon />Copy</LineButton>
            <LineButton><BrushIcon />Format Painter</LineButton>
          </Stack>
        </RibbonGroup>

        <RibbonGroup w={269} name="Font" pad={5}>
          <Rows>
            <Row>
              <Combo $w={98}><select aria-label="Font"><option>Times New Rom</option></select><Down /></Combo>
              <Combo $w={43}><select aria-label="Font size"><option>12</option></select><Down /></Combo>
              <Tool $w={24} aria-label="Grow font"><Glyph $size={17}>A</Glyph><svg width="5" height="14"><path d="M0 3h5L2.5 0z" fill="#2f5aa8" /></svg></Tool>
              <Tool $w={22} aria-label="Shrink font"><Glyph $size={13}>A</Glyph><svg width="5" height="14"><path d="M0 0h5L2.5 3z" fill="#2f5aa8" /></svg></Tool>
              <Rule $w={8} />
              <Split w={25} label="Change case"><Glyph $size={14}>Aa</Glyph></Split>
              <Rule $w={12} />
              <Tool $w={20} aria-label="Clear formatting"><ClearFormat /></Tool>
            </Row>
            <Row>
              <Tool $w={23} aria-label="Bold"><Glyph>B</Glyph></Tool>
              <Tool $w={23} aria-label="Italic"><Glyph $italic $light>I</Glyph></Tool>
              <Split w={24} cw={11} label="Underline"><Glyph $line="underline">U</Glyph></Split>
              <Tool $w={25} aria-label="Strikethrough"><Sans $size={10} $line="line-through">abc</Sans></Tool>
              <Tool $w={24} aria-label="Subscript"><Sans $size={12}>x<small>2</small></Sans></Tool>
              <Tool $w={23} aria-label="Superscript"><Sans $size={12} $sup>x<small>2</small></Sans></Tool>
              <Rule $w={10} />
              <Split w={19} label="Text effects" off><EffectA /></Split>
              <Split w={28} label="Highlight"><Highlight /></Split>
              <Split w={27} label="Font color"><FontColor /></Split>
            </Row>
          </Rows>
        </RibbonGroup>

        <RibbonGroup w={228} name="Paragraph" pad={5}>
          <Rows>
            <Row>
              <Split w={24} label="Bullets"><ListIcon kind="bullet" /></Split>
              <Split w={28} label="Numbering"><ListIcon kind="number" /></Split>
              <Split w={23} label="Multilevel list"><ListIcon kind="multi" /></Split>
              <Rule $w={14} />
              <Tool $w={21} aria-label="Decrease indent"><Indent /></Tool>
              <Tool $w={22} aria-label="Increase indent"><Indent right /></Tool>
              <Rule $w={8} />
              <Tool $w={26} aria-label="Sort"><SortIcon /></Tool>
              <Rule $w={6} />
              <Tool $w={28} aria-label="Show marks"><Sans $size={16} $light>¶</Sans></Tool>
            </Row>
            <Row>
              <Tool $w={23} $on aria-label="Align left"><Align kind="left" /></Tool>
              <Tool $w={23} aria-label="Center"><Align kind="center" /></Tool>
              <Tool $w={25} aria-label="Align right"><Align kind="right" /></Tool>
              <Tool $w={22} aria-label="Justify"><Align kind="justify" /></Tool>
              <Rule $w={10} />
              <Split w={20} label="Line spacing"><Spacing /></Split>
              <Rule $w={16} />
              <Split w={20} cw={8} label="Shading"><Shading /></Split>
              <Split w={26} label="Borders"><Borders /></Split>
            </Row>
          </Rows>
        </RibbonGroup>

        <RibbonGroup w={507} name="Styles" pad={6}>
          <Gallery>
            {styleSet.map((s) => (
              <StyleCell key={s.name} $on={s.on}>
                <Sample $font={s.font} $size={s.size} $bold={s.bold} $italic={s.italic}>{s.sample}</Sample>
                <StyleName>{s.name}</StyleName>
              </StyleCell>
            ))}
            <GalleryNav>
              <GalleryStep $first aria-label="Previous styles"><Up c="#b5b5b8" /></GalleryStep>
              <GalleryStep aria-label="Next styles"><Down /></GalleryStep>
              <GalleryStep aria-label="All styles"><svg width="7" height="7"><path d="M0 .5h7" stroke="#555" /><path d="M1 3h5L3.5 6z" fill="#555" /></svg></GalleryStep>
            </GalleryNav>
          </Gallery>
          <ChangeStyles><ChangeIcon /><span>Change</span><Inline>Styles<Down /></Inline></ChangeStyles>
        </RibbonGroup>

        <RibbonGroup w={75} name="Editing" pad={7} launcher={false}>
          <Stack>
            <LineButton><FindIcon /><Inline>Find<Down /></Inline></LineButton>
            <LineButton $gap={2}><ReplaceIcon />Replace</LineButton>
            <LineButton $gap={4}><SelectIcon /><Inline>Select<Down /></Inline></LineButton>
          </Stack>
        </RibbonGroup>
      </Ribbon>

      <Workspace>
        <TabCorner aria-label="Tab stop type"><svg width="15" height="15"><rect x=".5" y=".5" width="14" height="14" fill="#fff" stroke="#858a92" /><path d="M6 6v5h5" fill="none" stroke="#444" strokeWidth="2" /></svg></TabCorner>
        <TopRuler><HorizontalRuler /></TopRuler>
        <ScrollTop>
          <SplitBar />
          <RulerToggle aria-label="View ruler"><svg width="12" height="12" fill="#f5eef0" stroke="#6b6070"><path d="M.5 2.5h3v-2h3v2h5v6h-2v2h-3v-2h-6z" /><path d="M2 3l3 3M6 9l3-3" strokeDasharray="1 1" /></svg></RulerToggle>
        </ScrollTop>
        <SideRuler><VerticalRuler /></SideRuler>
        <Canvas>
          <Sheet>
            <Para><Caret /><span>This is a test of the footnote bug that I found.<sup>1</sup></span></Para>
            <Ends>Ends<sup>2</sup></Ends>
            <Notes>
              <li><sup>1</sup>Test footnote</li>
              <li><sup>2</sup>Test footnote</li>
            </Notes>
            <Folio>1</Folio>
          </Sheet>
        </Canvas>
        <ScrollRail>
          <ScrollStep $h={17} aria-label="Scroll up"><svg width="9" height="5"><path d="M0 5h9L4.500 0z" fill="#444" /></svg></ScrollStep>
          <ScrollThumb><svg width="8" height="8"><path d="M0 .5h8M0 2.5h8M0 4.5h8M0 6.5h8" stroke="#888e97" /></svg></ScrollThumb>
          <ScrollStep $h={16} aria-label="Scroll down"><svg width="9" height="5"><path d="M0 0h9L4.500 5z" fill="#444" /></svg></ScrollStep>
          <BrowseSteps>
            <ScrollStep $h={17} aria-label="Previous page"><svg width="5" height="7"><path d="M0 3h5L2.5 0zM0 6h5L2.5 3z" fill="#444" /><path d="M0 6.5h5" stroke="#444" /></svg></ScrollStep>
            <ScrollStep $h={17} aria-label="Browse object"><svg width="8" height="8"><circle cx="4" cy="4" r="3" fill="#cfd2d8" stroke="#666" /></svg></ScrollStep>
            <ScrollStep $h={17} aria-label="Next page"><svg width="5" height="7"><path d="M0 1h5L2.5 4zM0 4h5L2.5 7z" fill="#444" /><path d="M0 .5h5" stroke="#444" /></svg></ScrollStep>
          </BrowseSteps>
        </ScrollRail>
      </Workspace>

      <StatusBar>
        <StatusCell $w={78}>Page: 1 of 1</StatusCell>
        <StatusCell $w={71}>Words: 12</StatusCell>
        <StatusRight>
          <ViewButton $on aria-label="Print layout"><DocLines kind="print" /></ViewButton>
          <ViewButton aria-label="Full screen reading"><DocLines kind="read" /></ViewButton>
          <ViewButton aria-label="Web layout"><DocLines kind="web" /></ViewButton>
          <ViewButton aria-label="Outline"><DocLines kind="outline" /></ViewButton>
          <ViewButton aria-label="Draft"><DocLines kind="draft" /></ViewButton>
          <ZoomValue>80%</ZoomValue>
          <button aria-label="Zoom out"><ZoomKnob /></button>
          <Slider type="range" min="0" max="100" defaultValue="40" aria-label="Zoom" />
          <button aria-label="Zoom in"><ZoomKnob plus /></button>
        </StatusRight>
      </StatusBar>

      <Taskbar>
        <Start aria-label="Start"><StartOrb /></Start>
        <TaskList>
          <Task $open aria-label="Internet Explorer"><IeIcon /></Task>
          <Task aria-label="iTunes"><ItunesIcon /></Task>
          <Task aria-label="DVD"><DvdIcon /></Task>
          <Task aria-label="Disc burner"><BurnIcon /></Task>
          <Task aria-label="Library"><BooksIcon /></Task>
          <Task $open $active aria-label="Word"><WordIcon /></Task>
          <Task $open $stacked aria-label="Scrivener"><ScrivIcon /></Task>
          <Task aria-label="Typewriter"><TypewriterIcon /></Task>
          <Task aria-label="Explorer"><ExplorerIcon /></Task>
        </TaskList>
        <Tray>
          <TrayButton aria-label="Show hidden icons"><svg width="7" height="4"><path d="M0 4h7L3.5 0z" fill="#fff" /></svg></TrayButton>
          {Object.entries(tray).map(([k, icon]) => <TrayButton key={k} aria-label={k}>{icon}</TrayButton>)}
          <Clock>3:08 AM<br />3/21/2013</Clock>
          <ShowDesktop aria-label="Show desktop" />
        </Tray>
      </Taskbar>
    </Desktop>
  );
}
